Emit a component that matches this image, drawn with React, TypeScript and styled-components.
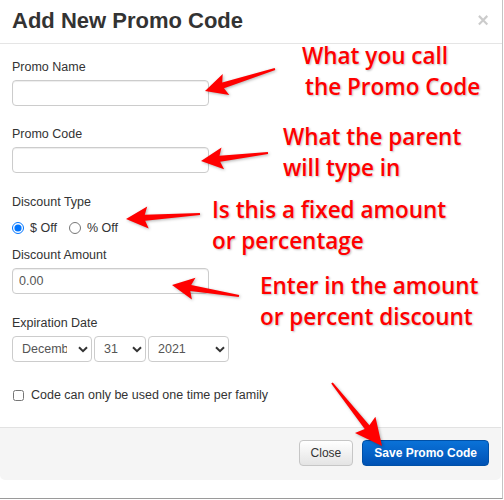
import React from "react";
import styled, { createGlobalStyle } from "styled-components";

const Global = createGlobalStyle`
  html, body { margin: 0; padding: 0; background: #fff; }
  body { font-family: "Liberation Sans", Arial, sans-serif; color: #333; }
  * { box-sizing: border-box; }
`;

const Frame = styled.div`
  position: relative;
  width: 503px;
  height: 499px;
  background: #fff;
  border-right: 1px solid #c4c4c4;
  border-bottom: 1px solid #9a9a9a;
  display: flex;
  flex-direction: column;
  overflow: hidden;
`;

const Header = styled.div`
  height: 44px;
  padding: 0 13px 0 12px;
  border-bottom: 1px solid #e5e5e5;
  display: flex;
  align-items: center;
  justify-content: space-between;
`;

const Title = styled.h4`
  margin: 0;
  font-size: 22px;
  line-height: 1.1;
  font-weight: bold;
  color: #333;
`;

const CloseX = styled.span`
  font-size: 20px;
  font-weight: bold;
  line-height: 1;
  color: #000;
  opacity: 0.2;
  margin-top: -3px;
`;

const Body = styled.div`
  padding: 15px 12px 24px 12px;
  display: flex;
  flex-direction: column;
`;

const Group = styled.div<{ $mb: number }>`
  display: flex;
  flex-direction: column;
  align-items: flex-start;
  margin-bottom: ${(p) => p.$mb}px;
`;

const Label = styled.label<{ $mb?: number }>`
  font-size: 12.5px;
  line-height: 17px;
  color: #333;
  margin-bottom: ${(p) => (p.$mb === undefined ? 4 : p.$mb)}px;
`;

const TextInput = styled.input`
  width: 197px;
  height: 26px;
  padding: 0 6px;
  border: 1px solid #ccc;
  border-radius: 4px;
  box-shadow: inset 0 1px 1px rgba(0, 0, 0, 0.075);
  font-family: "Liberation Sans", Arial, sans-serif;
  font-size: 12.5px;
  color: #555;
  background: #fff;
  outline: none;
`;

const RadioRow = styled.div`
  margin-top: 7px;
  height: 20px;
  display: flex;
  align-items: center;
  font-size: 12.5px;
  color: #333;
`;

const RadioItem = styled.label`
  display: flex;
  align-items: center;
  gap: 6px;
  margin-right: 12px;
`;

const Radio = styled.input`
  margin: 0;
  width: 12px;
  height: 12px;
`;

const DateRow = styled.div`
  display: flex;
  gap: 2px;
`;

const SelectWrap = styled.div<{ $w: number }>`
  position: relative;
  width: ${(p) => p.$w}px;
  height: 26px;
`;

const Select = styled.select`
  appearance: none;
  -webkit-appearance: none;
  width: 100%;
  height: 100%;
  border: 1px solid #ccc;
  border-radius: 4px;
  background: #fff;
  padding: 0 24px 0 9px;
  font-family: "Liberation Sans", Arial, sans-serif;
  font-size: 12.5px;
  color: #555;
  outline: none;
  text-overflow: clip;
`;

const Chevron = styled.svg`
  position: absolute;
  right: 4px;
  top: 10px;
  pointer-events: none;
`;

const CheckRow = styled.label`
  margin-top: 25px;
  height: 16px;
  display: flex;
  align-items: center;
  gap: 7px;
  font-size: 12.5px;
  color: #333;
`;

const Check = styled.input`
  margin: 0 0 0 1px;
  width: 11px;
  height: 11px;
`;

const Footer = styled.div`
  border-top: 1px solid #e2e2e2;
  background: #f5f5f5;
  border-radius: 0 0 5px 5px;
  margin-right: 1px;
  padding: 12px 12px 14px 12px;
  display: flex;
  justify-content: flex-end;
  gap: 9px;
`;

const Button = styled.button<{ $primary?: boolean }>`
  height: 26px;
  padding: 0 11px;
  border-radius: 4px;
  font-family: "Liberation Sans", Arial, sans-serif;
  font-size: 12px;
  font-weight: ${(p) => (p.$primary ? "bold" : "normal")};
  color: ${(p) => (p.$primary ? "#fff" : "#333")};
  border: 1px solid ${(p) => (p.$primary ? "#0050a6" : "#c6c6c6")};
  background: ${(p) =>
    p.$primary
      ? "linear-gradient(to bottom, #0a72d8 0%, #0052b5 100%)"
      : "linear-gradient(to bottom, #ffffff 0%, #e4e4e4 100%)"};
`;

const Note = styled.div<{ $x: number; $y: number }>`
  position: absolute;
  left: ${(p) => p.$x}px;
  top: ${(p) => p.$y}px;
  font-family: "Open Sans", "Noto Sans", sans-serif;
  font-size: 22.5px;
  font-weight: 600;
  line-height: 31px;
  color: #ff0000;
  white-space: nowrap;
  text-shadow: 1px 1px 2px rgba(0, 0, 0, 0.25);
`;

const NoteLine = styled.div<{ $indent?: number }>`
  padding-left: ${(p) => p.$indent || 0}px;
`;

const Overlay = styled.svg`
  position: absolute;
  left: 0;
  top: 0;
  pointer-events: none;
  filter: drop-shadow(1px 1px 1.5px rgba(0, 0, 0, 0.3));
`;

type Pt = [number, number];

function arrowPoints(
  tail: Pt,
  tip: Pt,
  headLen: number,
  headHalf: number,
  shaftHead: number,
  shaftTail: number
): string {
  const dx = tail[0] - tip[0];
  const dy = tail[1] - tip[1];
  const len = Math.hypot(dx, dy);
  const ux = dx / len;
  const uy = dy / len;
  const nx = -uy;
  const ny = ux;
  const bx = tip[0] + ux * headLen;
  const by = tip[1] + uy * headLen;
  const bx2 = tip[0] + ux * (headLen - 3);
  const by2 = tip[1] + uy * (headLen - 3);
  const pts: Pt[] = [
    tip,
    [bx + nx * headHalf, by + ny * headHalf],
    [bx2 + nx * (shaftHead / 2), by2 + ny * (shaftHead / 2)],
    [tail[0] + nx * (shaftTail / 2), tail[1] + ny * (shaftTail / 2)],
    [tail[0] - nx * (shaftTail / 2), tail[1] - ny * (shaftTail / 2)],
    [bx2 - nx * (shaftHead / 2), by2 - ny * (shaftHead / 2)],
    [bx - nx * headHalf, by - ny * headHalf],
  ];
  return pts.map((p) => `${p[0].toFixed(1)},${p[1].toFixed(1)}`).join(" ");
}

const arrows: { tail: Pt; tip: Pt; hl: number; hh: number }[] = [
  { tail: [275, 69], tip: [205, 91], hl: 22, hh: 11 },
  { tail: [268, 153], tip: [201, 161], hl: 22, hh: 11 },
  { tail: [200, 214], tip: [126, 219], hl: 22, hh: 11 },
  { tail: [239, 296], tip: [172, 285], hl: 22, hh: 11 },
  { tail: [332, 383], tip: [382, 446], hl: 27, hh: 13 },
];

const ChevronIcon = () => (
  <Chevron width="10" height="7" viewBox="0 0 10 7">
    <path d="M1 1.2 L5 5.2 L9 1.2" fill="none" stroke="#333" strokeWidth="2" />
  </Chevron>
);

export default function App() {
  return (
    <>
      <Global />
      <Frame>
        <Header>
          <Title>Add New Promo Code</Title>
          <CloseX>×</CloseX>
        </Header>
        <Body>
          <Group $mb={20}>
            <Label>Promo Name</Label>
            <TextInput type="text" />
          </Group>
          <Group $mb={21}>
            <Label>Promo Code</Label>
            <TextInput type="text" />
          </Group>
          <Group $mb={9}>
            <Label $mb={0}>Discount Type</Label>
            <RadioRow>
              <RadioItem>
                <Radio type="radio" name="dtype" defaultChecked />
                $ Off
              </RadioItem>
              <RadioItem>
                <Radio type="radio" name="dtype" />
                % Off
              </RadioItem>
            </RadioRow>
          </Group>
          <Group $mb={21}>
            <Label>Discount Amount</Label>
            <TextInput type="text" defaultValue="0.00" />
          </Group>
          <Group $mb={0}>
            <Label>Expiration Date</Label>
            <DateRow>
              <SelectWrap $w={80}>
                <Select defaultValue="December">
                  <option>November</option>
                  <option>December</option>
                </Select>
                <ChevronIcon />
              </SelectWrap>
              <SelectWrap $w={52}>
                <Select defaultValue="31">
                  <option>30</option>
                  <option>31</option>
                </Select>
                <ChevronIcon />
              </SelectWrap>
              <SelectWrap $w={81}>
                <Select defaultValue="2021">
                  <option>2021</option>
                  <option>2022</option>
                </Select>
                <ChevronIcon />
              </SelectWrap>
            </DateRow>
          </Group>
          <CheckRow>
            <Check type="checkbox" />
            Code can only be used one time per family
          </CheckRow>
        </Body>
        <Footer>
          <Button>Close</Button>
          <Button $primary>Save Promo Code</Button>
        </Footer>

        <Note $x={302} $y={40}>
          <NoteLine>What you call</NoteLine>
          <NoteLine $indent={3}>the Promo Code</NoteLine>
        </Note>
        <Note $x={283} $y={121}>
          <NoteLine>What the parent</NoteLine>
          <NoteLine>will type in</NoteLine>
        </Note>
        <Note $x={212} $y={194}>
          <NoteLine>Is this a fixed amount</NoteLine>
          <NoteLine>or percentage</NoteLine>
        </Note>
        <Note $x={260} $y={270}>
          <NoteLine>Enter in the amount</NoteLine>
          <NoteLine>or percent discount</NoteLine>
        </Note>

        <Overlay width="504" height="500" viewBox="0 0 504 500">
          {arrows.map((a, i) => (
            <polygon
              key={i}
              points={arrowPoints(a.tail, a.tip, a.hl, a.hh, 6, 2)}
              fill="#ff0000"
            />
          ))}
        </Overlay>
      </Frame>
    </>
  );
}
